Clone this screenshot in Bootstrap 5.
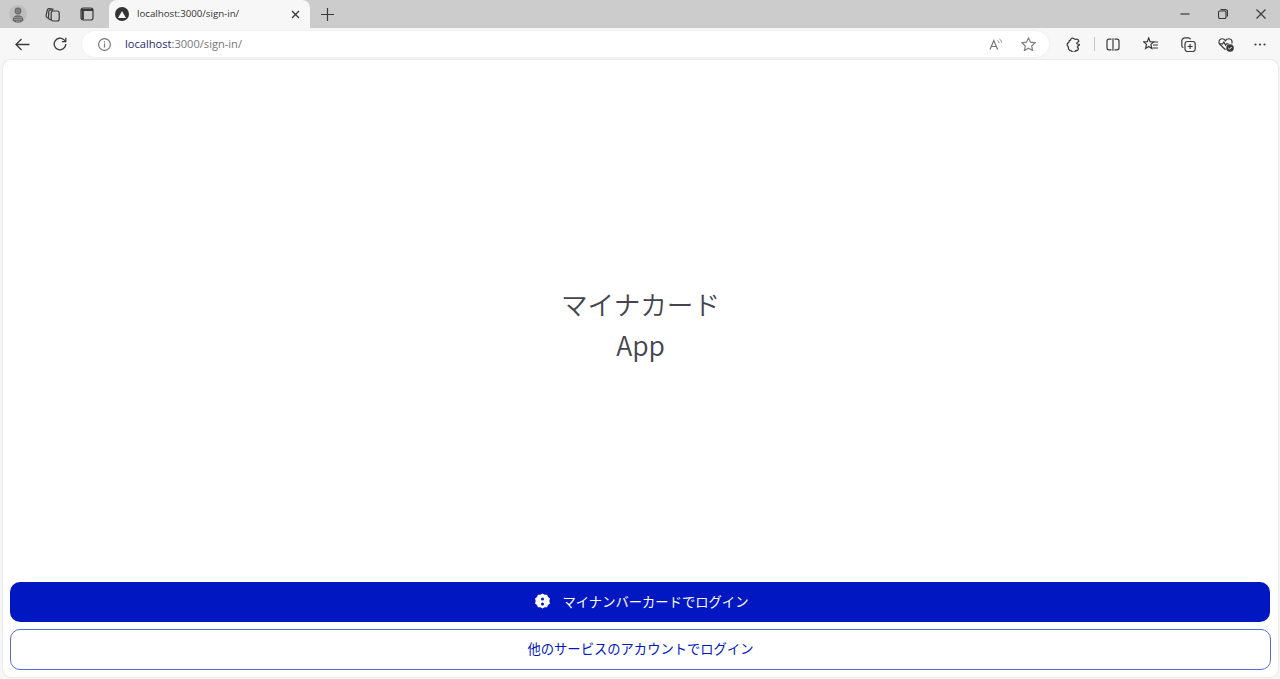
<!DOCTYPE html>
<html lang="ja">
<head>
    <meta charset="UTF-8">
    <title>localhost:3000/sign-in/</title>
    <link href="https://cdn.jsdelivr.net/npm/bootstrap@5.3.3/dist/css/bootstrap.min.css" rel="stylesheet">
    <style>
        html, body { height: 679px; overflow: hidden; }
        body {
            background: #f7f7f7;
            font-family: "Noto Sans CJK JP", "Noto Sans", sans-serif;
        }
        svg { display: block; fill: none; stroke: #3a3a3a; stroke-width: 1.2; }
        .tab-strip { height: 28px; background: #cccccc; }
        .strip-btn { width: 36px; height: 28px; flex: none; }
        .strip-narrow { width: 32px; }
        .strip-wide { width: 38px; }
        .strip-plus { width: 34px; }
        .page-tab {
            width: 201px; height: 28px; margin-left: 3px;
            padding: 0 10px 0 6px;
            background: #f7f7f7;
            border-radius: 8px 8px 0 0;
            font-family: "Open Sans", sans-serif;
            font-size: 9.7px; color: #333;
        }
        .tab-favicon { width: 14px; height: 14px; border-radius: 50%; background: #333; margin-right: 8px; }
        .win-btn { width: 38px; height: 28px; }
        .tool-bar { height: 32px; padding-left: 4px; }
        .tool-btn { width: 37.5px; height: 32px; flex: none; }
        .tool-btn-first { margin-left: 6px; }
        .tool-btn-last { width: 31px; }
        .back-btn { width: 37px; }
        .url-box {
            width: 967px; height: 26px; margin-left: 4px;
            background: #fff; border-radius: 13px;
            padding: 0 13px 0 16px;
            font-family: "Open Sans", sans-serif;
            font-size: 11.1px; color: #777;
            box-shadow: 0 0 2px rgba(0,0,0,.08);
        }
        .url-host { color: #1f2a6b; }
        .url-text { margin-left: 14px; }
        .read-icon { margin-right: 18px; }
        .tool-sep { width: 1px; height: 14px; background: #c4c4c4; flex: none; margin-left: 1px; }
        .page-view {
            height: 617px; margin: 0 2px 2px 3px;
            background: #fff; border-radius: 8px;
            box-shadow: 0 0 2px rgba(0,0,0,.18);
            padding: 0 7px 7px 7px;
        }
        .hero-title { font-size: 26.6px; line-height: 41px; color: #45454f; padding-top: 6px; font-weight: 350; }
        .login-stack { gap: 7px; }
        .login-main, .login-sub {
            font-size: 13.3px; border-radius: 10px; line-height: 20px;
        }
        .login-main {
            height: 40px; padding: 0 0 1px 2px; margin-right: 1px;
            background: #0017c1; border: 0; color: #fff;
        }
        .login-main:hover { background: #0017c1; color: #fff; }
        .login-sub {
            height: 41px; padding: 0 0 2px;
            background: #fff; border: 1px solid #5a6bdc; color: #0017c1;
        }
        .login-icon { stroke: none; fill: #fff; }
    </style>
</head>
<body class="d-flex flex-column">
    <div class="tab-strip d-flex align-items-center">
        <div class="strip-btn d-flex align-items-center justify-content-center">
            <svg width="18" height="18" viewBox="0 0 18 18" style="stroke:none">
                <circle cx="9" cy="9" r="9" fill="#bdbdbd"/>
                <circle cx="9" cy="6" r="3.400" fill="#6a6a6a"/>
                <path d="M3.500 15c.6-3.400 2.600-4.800 5.500-4.800s4.900 1.400 5.500 4.800c-1 1.800-3 2.800-5.500 2.800s-4.500-1-5.500-2.800z" fill="#6a6a6a"/>
                <path d="M7 5h4M7 7h4M5 12.500h8M5 14.500h8M7 16.300h4" stroke="#a8a8a8" stroke-width=".7"/>
            </svg>
        </div>
        <div class="strip-btn strip-narrow d-flex align-items-center justify-content-center">
            <svg width="15" height="15" viewBox="0 0 15 15">
                <rect x="6.200" y="4" width="8" height="10" rx="2"/>
                <path d="M6 13 4.600 12.400C3.800 12 3.400 11.300 3.500 10.400L3.800 4.600C3.900 3.500 4.800 2.800 5.900 3L8 3.400"/>
                <path d="M3.600 11.600 2 10.600C1.200 10 .9 9.200 1.100 8.300L2.300 3C2.600 2 3.500 1.400 4.500 1.600L8.500 2.400"/>
            </svg>
        </div>
        <div class="strip-btn strip-wide d-flex align-items-center justify-content-center">
            <svg width="14" height="14" viewBox="0 0 14 14">
                <rect x="1" y="1" width="12" height="12" rx="2.200"/>
                <path d="M1 2.800h12M2.800 3v9.500" stroke-width="2.200"/>
            </svg>
        </div>
        <div class="page-tab d-flex align-items-center">
            <span class="tab-favicon d-flex align-items-center justify-content-center">
                <svg width="8" height="7" viewBox="0 0 8 7" style="stroke:none"><path d="M4 0 8 7H0z" fill="#f7f7f7"/></svg>
            </span>
            <span class="flex-grow-1">localhost:3000/sign-in/</span>
            <svg width="9" height="9" viewBox="0 0 9 9"><path d="M1 1l7 7M8 1 1 8" stroke-width="1.400"/></svg>
        </div>
        <div class="strip-btn strip-plus d-flex align-items-center justify-content-center">
            <svg width="13" height="13" viewBox="0 0 13 13"><path d="M6.500 0v13M0 6.500h13"/></svg>
        </div>
        <div class="flex-grow-1"></div>
        <div class="win-btn d-flex align-items-center justify-content-center">
            <svg width="10" height="10" viewBox="0 0 10 10"><path d="M.5 5h9"/></svg>
        </div>
        <div class="win-btn d-flex align-items-center justify-content-center">
            <svg width="10" height="10" viewBox="0 0 10 10"><rect x=".5" y="2" width="7.500" height="7.500" rx="1.500"/><path d="M2.500.6h5c1.200 0 2 .8 2 2v5"/></svg>
        </div>
        <div class="win-btn d-flex align-items-center justify-content-center">
            <svg width="10" height="10" viewBox="0 0 10 10"><path d="M.5.5l9 9M9.500.5l-9 9"/></svg>
        </div>
    </div>

    <div class="tool-bar d-flex align-items-center">
        <div class="tool-btn back-btn d-flex align-items-center justify-content-center">
            <svg width="15" height="13" viewBox="0 0 15 13"><path d="M14.500 6.500H1M6.500 1 1 6.500 6.500 12" stroke-width="1.300"/></svg>
        </div>
        <div class="tool-btn back-btn d-flex align-items-center justify-content-center">
            <svg width="14" height="14" viewBox="0 0 14 14"><path d="M12.800 7a5.800 5.800 0 1 1-1.700-4.100l1.700 1.700" stroke-width="1.300"/><path d="M12.800.8v3.900H8.900" stroke-width="1.300"/></svg>
        </div>
        <div class="url-box d-flex align-items-center">
            <svg width="13" height="13" viewBox="0 0 13 13" style="stroke:#777"><circle cx="6.500" cy="6.500" r="5.900"/><path d="M6.500 5.500v4M6.500 3.200v1.200"/></svg>
            <span class="url-text flex-grow-1"><span class="url-host">localhost</span>:3000/sign-in/</span>
            <svg class="read-icon" width="14" height="13" viewBox="0 0 14 13" style="stroke:#777"><path d="M1 11.500 4.800 2.500 8.600 11.500M2.200 8.500h5.200"/><path d="M8.500 2.500c1 .5 1.500 1.300 1.500 2.500M10.500 1c1.300.8 2 2 2 3.500" stroke-width=".9"/></svg>
            <svg width="15" height="14" viewBox="0 0 15 14" style="stroke:#808080"><path d="M7.500 1l2 4.200 4.600.6-3.400 3.200.9 4.500-4.100-2.300-4.100 2.300.9-4.500L.9 5.800l4.600-.6z"/></svg>
        </div>
        <div class="tool-btn tool-btn-first d-flex align-items-center justify-content-center">
            <svg width="15" height="15" viewBox="0 0 15 15"><path d="M4.500 3.200C4.700 1.200 6.500.6 7.700 1.500c.6.400 1 .9 2 .9 1.400-.6 3 .2 3.100 1.900 0 .8-1.700.6-2 1.700-.3 1 1.200 1.300 2.300 1.300.8.400-.2 1.200-.9 1.600-.8.400-1 1.200-.3 1.800.9.900.2 2.800-1.100 2.800-.8 0-1.300.3-1.700.8-.8 1-2.400 1-3.200 0-.5-.6-1-.8-1.700-.7C3.300 13 2 11.800 2.300 10.300c.1-.6-.1-1-.5-1.400C.8 8 1 6.300 2.200 5.800c.7-.3.900-.7.900-1.300 0-.7.600-1.300 1.400-1.300z" stroke-width="1.300"/></svg>
        </div>
        <div class="tool-sep"></div>
        <div class="tool-btn d-flex align-items-center justify-content-center">
            <svg width="14" height="13" viewBox="0 0 14 13"><path d="M5.500 1.200H3C1.700 1.200 1 2 1 3.200v6.600c0 1.200.7 2 2 2h2.500M8.500 1.200H11c1.300 0 2 .8 2 2v6.600c0 1.200-.7 2-2 2H8.500M7 .2v12.600" stroke-width="1.200"/></svg>
        </div>
        <div class="tool-btn d-flex align-items-center justify-content-center">
            <svg width="15" height="14" viewBox="0 0 15 14"><path d="M5.700 1l1.400 3.600 3.500.3-2.700 2.500.9 4.100-3.100-2-3.100 2 .9-4.100L.8 4.900l3.500-.3z"/><path d="M10.500 5h4.500M10 8h5M9.500 11H15"/></svg>
        </div>
        <div class="tool-btn d-flex align-items-center justify-content-center">
            <svg width="15" height="15" viewBox="0 0 15 15"><rect x="4" y="4.500" width="10.200" height="10" rx="2.500"/><path d="M9.100 7v5M6.600 9.500h5"/><path d="M2.300 10.800C1.300 10.400.8 9.600.8 8.600V4C.8 2.200 2.200.8 4 .8h3.200c1.200 0 2 .6 2.400 1.500"/></svg>
        </div>
        <div class="tool-btn d-flex align-items-center justify-content-center">
            <svg width="16" height="15" viewBox="0 0 16 15"><path d="M7.500 12.800 2 7.500C.2 5.700.8 2.800 3 2c1.700-.6 3.300 0 4.500 1.700C8.700 2 10.300 1.400 12 2c1.800.7 2.600 2.700 1.800 4.500"/><path d="M1.500 6.800h3.200l1.200-1.800 1.600 3.200 1-1.400h2"/><circle cx="12" cy="11" r="3.800" fill="#3a3a3a" stroke="none"/><path d="M10.300 11l1.200 1.200 2.100-2.200" stroke="#fff" stroke-width="1"/></svg>
        </div>
        <div class="tool-btn tool-btn-last d-flex align-items-center justify-content-center">
            <svg width="12" height="3" viewBox="0 0 12 3" style="stroke:none"><g fill="#3a3a3a"><circle cx="1.500" cy="1.500" r="1.100"/><circle cx="6" cy="1.500" r="1.100"/><circle cx="10.500" cy="1.500" r="1.100"/></g></svg>
        </div>
    </div>

    <main class="page-view d-flex flex-column">
        <div class="flex-grow-1 d-flex align-items-center justify-content-center">
            <h1 class="hero-title text-center m-0">マイナカード<br>App</h1>
        </div>
        <div class="login-stack d-flex flex-column">
            <button type="button" class="btn login-main d-flex align-items-center justify-content-center">
                <svg class="login-icon me-2" width="17" height="17" viewBox="0 0 17 17">
                    <path fill-rule="evenodd" d="M8.500.5l2.100 1.300 2.500-.1.900 2.300 2 1.500-.7 2.500.7 2.500-2 1.500-.9 2.300-2.500-.1-2.100 1.300-2.100-1.300-2.500.1-.9-2.300-2-1.500.7-2.500-.7-2.500 2-1.500.9-2.300 2.500.1zM8.500 4.400a1.500 1.500 0 1 0 0 3 1.500 1.500 0 0 0 0-3zM8.500 9.400a1.500 1.500 0 1 0 0 3 1.500 1.500 0 0 0 0-3z"/>
                </svg>
                <span class="ms-1">マイナンバーカードでログイン</span>
            </button>
            <button type="button" class="btn login-sub">他のサービスのアカウントでログイン</button>
        </div>
    </main>
    <script src="https://cdn.jsdelivr.net/npm/bootstrap@5.3.3/dist/js/bootstrap.bundle.min.js"></script>
</body>
</html>
